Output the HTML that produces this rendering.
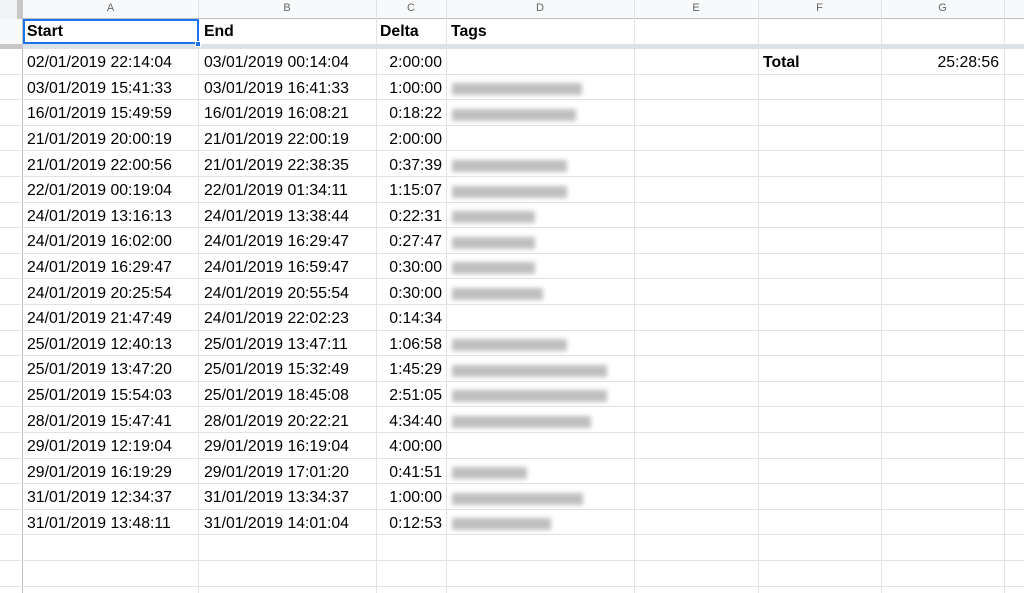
<!DOCTYPE html>
<html><head><meta charset="utf-8"><style>
*{margin:0;padding:0;box-sizing:border-box}
body{width:1024px;height:593px;overflow:hidden;background:#fff;font-family:"Liberation Sans",Arial,sans-serif;font-size:15.8px;color:#000;position:relative}
.hdr{position:absolute;top:0;left:0;width:1024px;height:19px;background:#f8f9fa;border-bottom:1px solid #c0c0c0}
.hdr span{position:absolute;top:2px;font-size:11px;color:#666;text-align:center}
.vl{position:absolute;top:0;width:1px;height:593px;background:#e2e2e2}
.row{position:absolute;left:0;width:1024px;border-bottom:1px solid #e2e2e2}
.c{position:absolute;top:0;height:100%;display:flex;align-items:center;white-space:nowrap;padding-top:4px}
.b{font-weight:bold}
.r{justify-content:flex-end}
.blur{position:absolute;left:452px;height:12px;background:#aaa;filter:blur(2.5px);opacity:.75}
</style></head><body>
<div class="hdr">
<span style="left:23px;width:175px">A</span>
<span style="left:198px;width:178px">B</span>
<span style="left:376px;width:70px">C</span>
<span style="left:446px;width:188px">D</span>
<span style="left:634px;width:124px">E</span>
<span style="left:758px;width:123px">F</span>
<span style="left:881px;width:123px">G</span>
</div>
<div style="position:absolute;left:22px;top:0;width:1px;height:593px;background:#c0c0c0"></div>
<div style="position:absolute;left:17px;top:0;width:6px;height:19px;background:#c7c7c7"></div>
<div style="position:absolute;left:0;top:0;width:17px;height:19px;background:#f1f3f4"></div>
<div style="position:absolute;left:0;top:19px;width:22px;height:25px;background:#f8f9fa"></div>
<div class="vl" style="left:198px"></div><div class="vl" style="left:376px"></div><div class="vl" style="left:446px"></div><div class="vl" style="left:634px"></div><div class="vl" style="left:758px"></div><div class="vl" style="left:881px"></div><div class="vl" style="left:1004px"></div>
<div style="position:absolute;left:23px;top:44px;width:1001px;height:5px;background:#dde1ea"></div>
<div style="position:absolute;left:0;top:44px;width:23px;height:5px;background:#c7c7c7"></div>

<div class="row" style="top:19px;height:25px;border:none">
<div class="c b" style="left:27px;padding-top:1px">Start</div><div class="c b" style="left:204px;padding-top:1px">End</div><div class="c b" style="left:380px;padding-top:1px">Delta</div><div class="c b" style="left:451px;padding-top:1px">Tags</div>
</div>
<div style="position:absolute;left:23px;top:19px;width:176px;height:25px;border:2px solid #1a73e8"></div>
<div style="position:absolute;left:195px;top:41px;width:6px;height:6px;background:#1a73e8;border:1px solid #fff"></div>

<div class="row" style="top:49px;height:25.6px"><div class="c" style="left:27px">02/01/2019 22:14:04</div><div class="c" style="left:204px">03/01/2019 00:14:04</div><div class="c r" style="left:376px;width:66px">2:00:00</div><div class="c b" style="left:763px">Total</div><div class="c r" style="left:881px;width:118px">25:28:56</div></div>
<div class="row" style="top:74.6px;height:25.6px"><div class="c" style="left:27px">03/01/2019 15:41:33</div><div class="c" style="left:204px">03/01/2019 16:41:33</div><div class="c r" style="left:376px;width:66px">1:00:00</div></div>
<div class="row" style="top:100.2px;height:25.6px"><div class="c" style="left:27px">16/01/2019 15:49:59</div><div class="c" style="left:204px">16/01/2019 16:08:21</div><div class="c r" style="left:376px;width:66px">0:18:22</div></div>
<div class="row" style="top:125.8px;height:25.6px"><div class="c" style="left:27px">21/01/2019 20:00:19</div><div class="c" style="left:204px">21/01/2019 22:00:19</div><div class="c r" style="left:376px;width:66px">2:00:00</div></div>
<div class="row" style="top:151.4px;height:25.6px"><div class="c" style="left:27px">21/01/2019 22:00:56</div><div class="c" style="left:204px">21/01/2019 22:38:35</div><div class="c r" style="left:376px;width:66px">0:37:39</div></div>
<div class="row" style="top:177px;height:25.6px"><div class="c" style="left:27px">22/01/2019 00:19:04</div><div class="c" style="left:204px">22/01/2019 01:34:11</div><div class="c r" style="left:376px;width:66px">1:15:07</div></div>
<div class="row" style="top:202.6px;height:25.6px"><div class="c" style="left:27px">24/01/2019 13:16:13</div><div class="c" style="left:204px">24/01/2019 13:38:44</div><div class="c r" style="left:376px;width:66px">0:22:31</div></div>
<div class="row" style="top:228.2px;height:25.6px"><div class="c" style="left:27px">24/01/2019 16:02:00</div><div class="c" style="left:204px">24/01/2019 16:29:47</div><div class="c r" style="left:376px;width:66px">0:27:47</div></div>
<div class="row" style="top:253.8px;height:25.6px"><div class="c" style="left:27px">24/01/2019 16:29:47</div><div class="c" style="left:204px">24/01/2019 16:59:47</div><div class="c r" style="left:376px;width:66px">0:30:00</div></div>
<div class="row" style="top:279.4px;height:25.6px"><div class="c" style="left:27px">24/01/2019 20:25:54</div><div class="c" style="left:204px">24/01/2019 20:55:54</div><div class="c r" style="left:376px;width:66px">0:30:00</div></div>
<div class="row" style="top:305px;height:25.6px"><div class="c" style="left:27px">24/01/2019 21:47:49</div><div class="c" style="left:204px">24/01/2019 22:02:23</div><div class="c r" style="left:376px;width:66px">0:14:34</div></div>
<div class="row" style="top:330.6px;height:25.6px"><div class="c" style="left:27px">25/01/2019 12:40:13</div><div class="c" style="left:204px">25/01/2019 13:47:11</div><div class="c r" style="left:376px;width:66px">1:06:58</div></div>
<div class="row" style="top:356.2px;height:25.6px"><div class="c" style="left:27px">25/01/2019 13:47:20</div><div class="c" style="left:204px">25/01/2019 15:32:49</div><div class="c r" style="left:376px;width:66px">1:45:29</div></div>
<div class="row" style="top:381.8px;height:25.6px"><div class="c" style="left:27px">25/01/2019 15:54:03</div><div class="c" style="left:204px">25/01/2019 18:45:08</div><div class="c r" style="left:376px;width:66px">2:51:05</div></div>
<div class="row" style="top:407.4px;height:25.6px"><div class="c" style="left:27px">28/01/2019 15:47:41</div><div class="c" style="left:204px">28/01/2019 20:22:21</div><div class="c r" style="left:376px;width:66px">4:34:40</div></div>
<div class="row" style="top:433px;height:25.6px"><div class="c" style="left:27px">29/01/2019 12:19:04</div><div class="c" style="left:204px">29/01/2019 16:19:04</div><div class="c r" style="left:376px;width:66px">4:00:00</div></div>
<div class="row" style="top:458.6px;height:25.6px"><div class="c" style="left:27px">29/01/2019 16:19:29</div><div class="c" style="left:204px">29/01/2019 17:01:20</div><div class="c r" style="left:376px;width:66px">0:41:51</div></div>
<div class="row" style="top:484.2px;height:25.6px"><div class="c" style="left:27px">31/01/2019 12:34:37</div><div class="c" style="left:204px">31/01/2019 13:34:37</div><div class="c r" style="left:376px;width:66px">1:00:00</div></div>
<div class="row" style="top:509.8px;height:25.6px"><div class="c" style="left:27px">31/01/2019 13:48:11</div><div class="c" style="left:204px">31/01/2019 14:01:04</div><div class="c r" style="left:376px;width:66px">0:12:53</div></div>
<div class="row" style="top:535.4px;height:25.6px"></div>
<div class="row" style="top:561px;height:25.6px"></div>

<div class="blur" style="top:83px;width:130px"></div>
<div class="blur" style="top:109px;width:124px"></div>
<div class="blur" style="top:160px;width:115px"></div>
<div class="blur" style="top:186px;width:115px"></div>
<div class="blur" style="top:211px;width:83px"></div>
<div class="blur" style="top:237px;width:83px"></div>
<div class="blur" style="top:262px;width:83px"></div>
<div class="blur" style="top:288px;width:91px"></div>
<div class="blur" style="top:339px;width:115px"></div>
<div class="blur" style="top:365px;width:155px"></div>
<div class="blur" style="top:390px;width:155px"></div>
<div class="blur" style="top:416px;width:139px"></div>
<div class="blur" style="top:467px;width:75px"></div>
<div class="blur" style="top:493px;width:131px"></div>
<div class="blur" style="top:518px;width:99px"></div>
</body></html>
